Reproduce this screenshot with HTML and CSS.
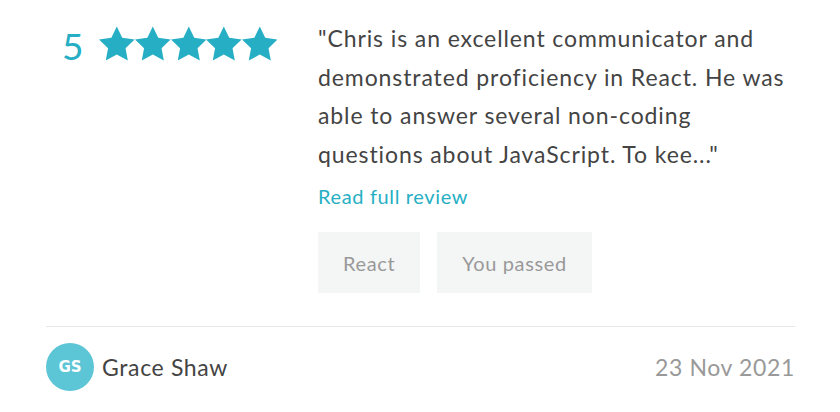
FILE: index.html
```html
<!DOCTYPE html>
<html>
<head>
<meta charset="utf-8">
<link rel="stylesheet" href="styles.css">
</head>
<body>
<div class="review">
  <div class="top">
    <div class="rating">
      <span class="score">5</span>
      <div class="stars">
        <svg class="star" viewBox="1.2 1.2 21.6 20.7"><path d="M12 1.2l3.3 6.9 7.5 1-5.5 5.3 1.4 7.5L12 18.3l-6.7 3.6 1.4-7.5L1.2 9.1l7.5-1z"/></svg>
        <svg class="star" viewBox="1.2 1.2 21.6 20.7"><path d="M12 1.2l3.3 6.9 7.5 1-5.5 5.3 1.4 7.5L12 18.3l-6.7 3.6 1.4-7.5L1.2 9.1l7.5-1z"/></svg>
        <svg class="star" viewBox="1.2 1.2 21.6 20.7"><path d="M12 1.2l3.3 6.9 7.5 1-5.5 5.3 1.4 7.5L12 18.3l-6.7 3.6 1.4-7.5L1.2 9.1l7.5-1z"/></svg>
        <svg class="star" viewBox="1.2 1.2 21.6 20.7"><path d="M12 1.2l3.3 6.9 7.5 1-5.5 5.3 1.4 7.5L12 18.3l-6.7 3.6 1.4-7.5L1.2 9.1l7.5-1z"/></svg>
        <svg class="star" viewBox="1.2 1.2 21.6 20.7"><path d="M12 1.2l3.3 6.9 7.5 1-5.5 5.3 1.4 7.5L12 18.3l-6.7 3.6 1.4-7.5L1.2 9.1l7.5-1z"/></svg>
      </div>
    </div>
    <div class="body">
      <p class="quote">"Chris is an excellent communicator and demonstrated proficiency in React. He was able to answer several non-coding questions about JavaScript. To kee..."</p>
      <a class="more">Read full review</a>
      <div class="tags">
        <span class="tag">React</span>
        <span class="tag">You passed</span>
      </div>
    </div>
  </div>
  <div class="footer">
    <div class="author">
      <div class="avatar">GS</div>
      <span class="name">Grace Shaw</span>
    </div>
    <span class="date">23 Nov 2021</span>
  </div>
</div>
</body>
</html>
```
FILE: styles.css
```css
html, body { margin: 0; padding: 0; background: #fff; }
body { font-family: Lato, "Open Sans", sans-serif; letter-spacing: 0.04em; }
.review { padding: 0 45px 0 46px; }
.top { display: flex; padding-bottom: 33px; border-bottom: 1px solid #e6e8e8; }
.rating { width: 272px; display: flex; align-items: flex-start; padding-left: 16px; padding-top: 24px; box-sizing: border-box; }
.score { font-size: 37px; color: #26afc4; line-height: 44px; margin-right: 16px; font-weight: 400; letter-spacing: 0; }
.stars { display: flex; margin-top: 2px; }
.star { width: 35.6px; height: 35px; fill: #26afc4; }
.body { flex: 1; padding-top: 19px; }
.quote { margin: 0; font-size: 23px; line-height: 38.5px; color: #444; letter-spacing: 0.9px; }
.more { display: block; margin-top: 9px; font-size: 20px; line-height: 28px; color: #26afc4; }
.tags { display: flex; gap: 17px; margin-top: 22px; }
.tag { background: #f4f5f5; color: #999; font-size: 20px; padding: 0 25px; height: 61px; display: flex; align-items: center; }
.footer { display: flex; justify-content: space-between; align-items: center; padding-top: 16px; }
.author { display: flex; align-items: center; gap: 8px; }
.avatar { width: 48px; height: 48px; border-radius: 50%; background: #5cc5d6; color: #fff; font-family: "DejaVu Sans", sans-serif; font-weight: 700; font-size: 15px; letter-spacing: 0; display: flex; align-items: center; justify-content: center; }
.name { font-size: 23px; color: #444; }
.date { font-size: 23px; color: #999; }
```
